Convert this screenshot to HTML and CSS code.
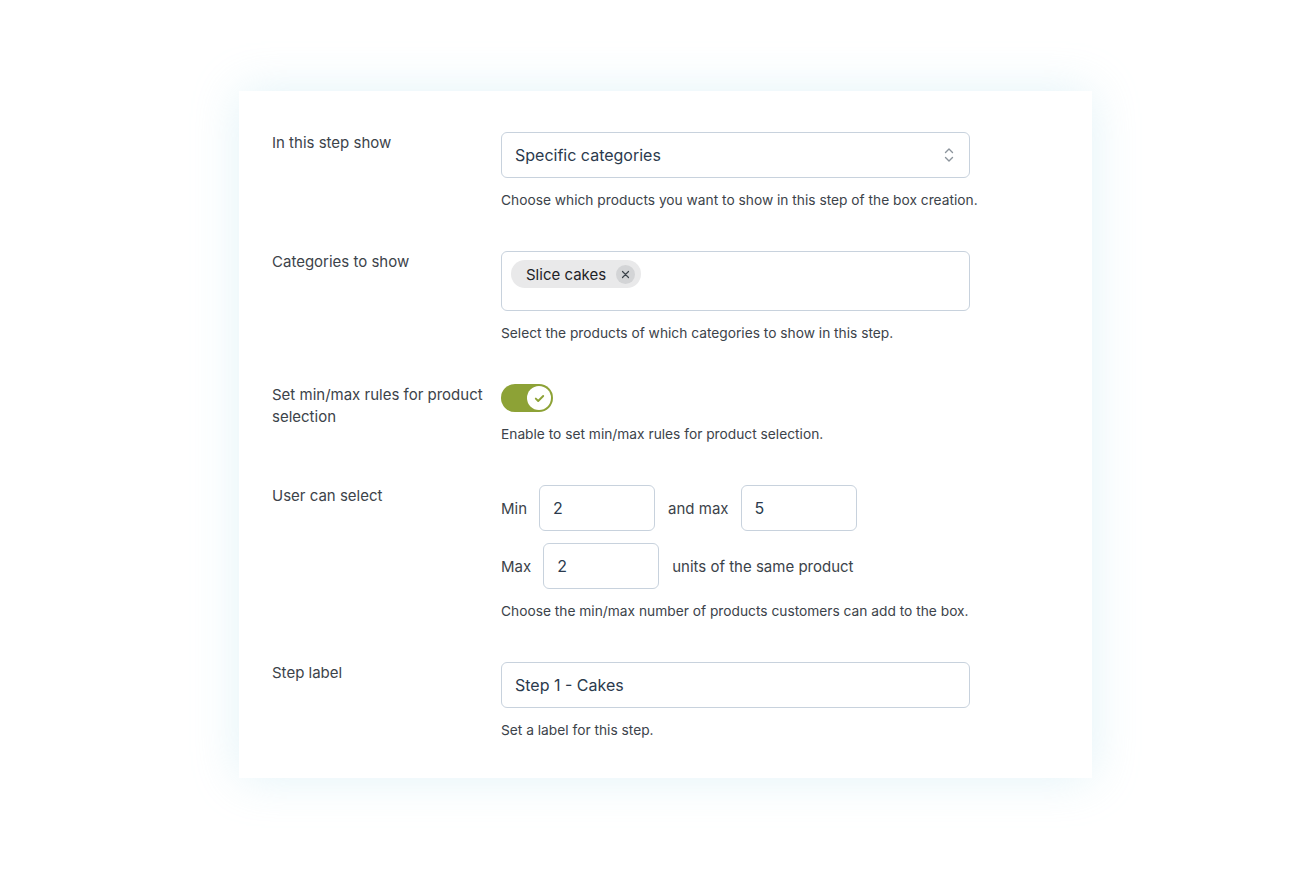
FILE: index.html
```html
<!DOCTYPE html>
<html lang="en">
<head>
    <meta charset="UTF-8">
    <meta name="viewport" content="width=device-width, initial-scale=1.0">
    <title>Step settings</title>
    <link rel="stylesheet" href="styles.css">
</head>
<body>
    <div class="card">
        <div class="row">
            <div class="label">In this step show</div>
            <div class="field">
                <div class="select">
                    <span>Specific categories</span>
                    <svg class="chevrons" width="12" height="18" viewBox="0 0 12 18">
                        <path d="M2.5 6.5 L6 3 L9.5 6.5" fill="none" stroke="#8c949c" stroke-width="1.4" stroke-linecap="round" stroke-linejoin="round"/>
                        <path d="M2.5 11.5 L6 15 L9.5 11.5" fill="none" stroke="#8c949c" stroke-width="1.4" stroke-linecap="round" stroke-linejoin="round"/>
                    </svg>
                </div>
                <p class="desc">Choose which products you want to show in this step of the box creation.</p>
            </div>
        </div>

        <div class="row">
            <div class="label">Categories to show</div>
            <div class="field">
                <div class="tagbox">
                    <span class="tag">Slice cakes
                        <span class="tag-x">
                            <svg width="9" height="9" viewBox="0 0 9 9">
                                <path d="M1.5 1.5 L7.5 7.5 M7.5 1.5 L1.5 7.5" stroke="#3c434a" stroke-width="1.2" stroke-linecap="round"/>
                            </svg>
                        </span>
                    </span>
                </div>
                <p class="desc">Select the products of which categories to show in this step.</p>
            </div>
        </div>

        <div class="row">
            <div class="label">Set min/max rules for product selection</div>
            <div class="field">
                <div class="toggle">
                    <span class="knob">
                        <svg width="11" height="9" viewBox="0 0 11 9">
                            <path d="M1.8 4.6 L4.2 7 L9.2 2" fill="none" stroke="#8da236" stroke-width="1.9" stroke-linecap="round" stroke-linejoin="round"/>
                        </svg>
                    </span>
                </div>
                <p class="desc">Enable to set min/max rules for product selection.</p>
            </div>
        </div>

        <div class="row">
            <div class="label">User can select</div>
            <div class="field">
                <div class="inline">
                    <span>Min</span>
                    <div class="input small">2</div>
                    <span>and max</span>
                    <div class="input small">5</div>
                </div>
                <div class="inline">
                    <span>Max</span>
                    <div class="input small">2</div>
                    <span>units of the same product</span>
                </div>
                <p class="desc">Choose the min/max number of products customers can add to the box.</p>
            </div>
        </div>

        <div class="row">
            <div class="label">Step label</div>
            <div class="field">
                <div class="input">Step 1 - Cakes</div>
                <p class="desc">Set a label for this step.</p>
            </div>
        </div>
    </div>
</body>
</html>
```

FILE: styles.css
```css
body {
    margin: 0;
    padding: 91px 0 93px 239px;
    background: #ffffff;
    font-family: Inter, "Noto Sans", sans-serif;
    color: #3c434a;
}
.card {
    width: 853px;
    padding: 41px 0 38px 33px;
    box-sizing: border-box;
    background: #fff;
    box-shadow: 0 0 44px rgba(165, 218, 234, 0.32);
    display: flex;
    flex-direction: column;
    gap: 41px;
}
.row {
    display: grid;
    grid-template-columns: 229px 469px;
}
.label {
    font-size: 15px;
    line-height: 22px;
    padding-right: 12px;
    color: #3c434a;
}
.desc {
    margin: 12px 0 0;
    font-size: 13.75px;
    line-height: 20px;
    color: #3c434a;
    white-space: nowrap;
}
.select, .input {
    height: 46px;
    box-sizing: border-box;
    border: 1px solid #c8d2dd;
    border-radius: 6px;
    padding: 0 13px;
    display: flex;
    align-items: center;
    font-size: 16px;
    color: #2b3a4d;
}
.select {
    justify-content: space-between;
}
.chevrons {
    margin-right: 1px;
}
.tagbox {
    height: 60px;
    box-sizing: border-box;
    border: 1px solid #c8d2dd;
    border-radius: 6px;
    padding: 8px 9px;
}
.tag {
    display: inline-flex;
    align-items: center;
    gap: 10px;
    height: 28px;
    padding: 0 6px 0 15px;
    border-radius: 14px;
    background: #e9e9ea;
    font-size: 15px;
    color: #1e2327;
}
.tag-x {
    width: 19px;
    height: 19px;
    border-radius: 50%;
    background: #d3d4d6;
    display: flex;
    align-items: center;
    justify-content: center;
}
.toggle {
    width: 52px;
    height: 28px;
    border-radius: 14px;
    background: #8da236;
    display: flex;
    align-items: center;
    justify-content: flex-end;
    padding: 0 2px;
    box-sizing: border-box;
}
.knob {
    width: 24px;
    height: 24px;
    border-radius: 50%;
    background: #fff;
    display: flex;
    align-items: center;
    justify-content: center;
}
.inline {
    display: flex;
    align-items: center;
    gap: 12px;
    font-size: 15px;
    color: #3c434a;
    margin-bottom: 12px;
}
.inline + .inline {
    margin-bottom: 0;
}
.input.small {
    width: 116px;
    height: 46px;
}
.inline .input.small + span {
    margin-left: 1px;
}
```
